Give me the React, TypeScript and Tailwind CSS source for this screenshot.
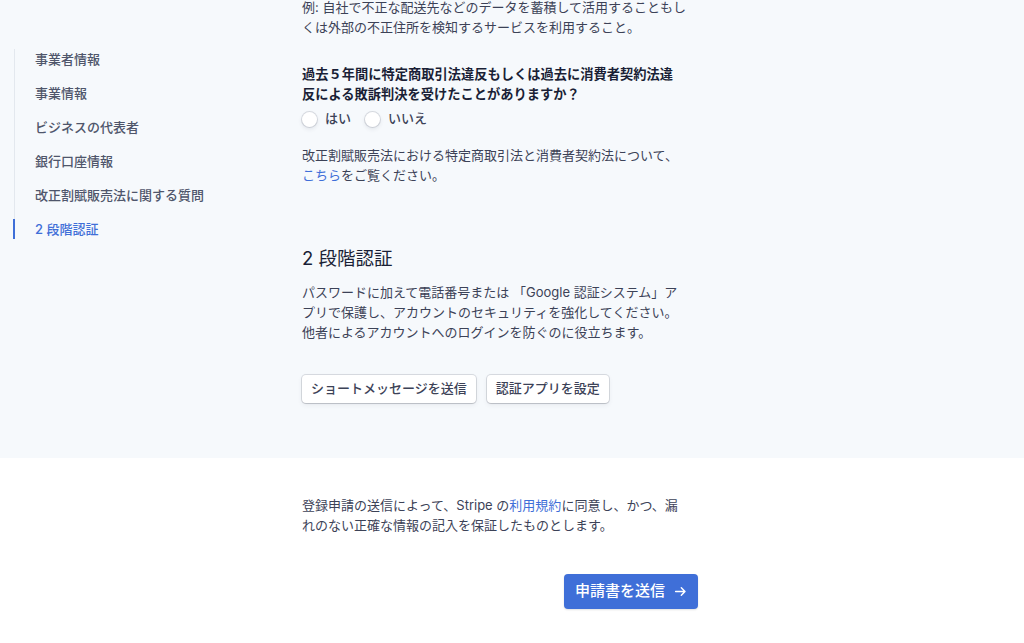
import React from "react";

const font = "font-['Inter','Noto_Sans_CJK_JP',sans-serif]";

function Radio({ label }: { label: string }) {
  return (
    <label className="flex items-center gap-[8px]">
      <span className="block w-[15px] h-[15px] rounded-full bg-white shadow-[0_0_0_1px_rgba(60,66,87,0.16),0_2px_4px_rgba(60,66,87,0.12)]" />
      <span className="text-[13px] font-medium text-[#3c4257]">{label}</span>
    </label>
  );
}

function SecButton({ children }: { children: React.ReactNode }) {
  return (
    <button className="h-[28px] px-[9px] rounded-[4px] bg-white text-[13px] font-medium text-[#3c4257] shadow-[0_0_0_1px_rgba(60,66,87,0.16),0_2px_5px_rgba(60,66,87,0.08),0_1px_1px_rgba(0,0,0,0.1)]">
      {children}
    </button>
  );
}

export default function App() {
  const nav = [
    "事業者情報",
    "事業情報",
    "ビジネスの代表者",
    "銀行口座情報",
    "改正割賦販売法に関する質問",
  ];
  return (
    <div className={`${font} w-[1024px] h-[643px] overflow-hidden bg-white`}>
      <div className="bg-[#f6f9fc] h-[458px] flex">
        <div className="w-[302px] shrink-0 pl-[14px] pt-[49px]">
          <ul className="border-l border-[#e3e8ee] flex flex-col gap-[14px]">
            {nav.map((n) => (
              <li key={n} className="pl-[20px] h-[20px] leading-[20px] text-[13px] font-medium text-[#4f566b]">
                {n}
              </li>
            ))}
            <li className="relative pl-[20px] h-[20px] leading-[20px] text-[13px] font-medium text-[#3f6fd8]">
              <span className="absolute left-[-2px] top-0 w-[2px] h-[20px] bg-[#3f6fd8]" />
              2 段階認証
            </li>
          </ul>
        </div>
        <div className="w-[396px] mt-[-3px] flex flex-col">
          <p className="text-[13px] leading-[20px] text-[#3c4257]">
            <span className="block whitespace-nowrap">例: 自社で不正な配送先などのデータを蓄積して活用することもし</span>
            <span className="block whitespace-nowrap">くは外部の不正住所を検知するサービスを利用すること。</span>
          </p>
          <p className="mt-[27px] text-[13.25px] leading-[20px] font-bold text-[#1a1f36]">
            <span className="block whitespace-nowrap">過去５年間に特定商取引法違反もしくは過去に消費者契約法違</span>
            <span className="block whitespace-nowrap">反による敗訴判決を受けたことがありますか？</span>
          </p>
          <div className="mt-[5px] h-[20px] flex items-center gap-[14px]">
            <Radio label="はい" />
            <Radio label="いいえ" />
          </div>
          <p className="mt-[16px] text-[13px] leading-[20px] text-[#3c4257]">
            <span className="block whitespace-nowrap">改正割賦販売法における特定商取引法と消費者契約法について、</span>
            <span className="block whitespace-nowrap">
              <span className="text-[#3f6fd8]">こちら</span>をご覧ください。
            </span>
          </p>
          <h2 className="mt-[59px] text-[18.5px] leading-[28px] font-normal text-[#1a1f36]">2 段階認証</h2>
          <p className="mt-[10px] text-[13px] leading-[20px] text-[#3c4257]">
            <span className="block whitespace-nowrap">パスワードに加えて電話番号または 「Google 認証システム」ア</span>
            <span className="block whitespace-nowrap">プリで保護し、アカウントのセキュリティを強化してください。</span>
            <span className="block whitespace-nowrap">他者によるアカウントへのログインを防ぐのに役立ちます。</span>
          </p>
          <div className="mt-[33px] flex gap-[11px]">
            <SecButton>ショートメッセージを送信</SecButton>
            <SecButton>認証アプリを設定</SecButton>
          </div>
        </div>
      </div>
      <div className="flex">
        <div className="w-[302px] shrink-0" />
        <div className="w-[396px] pt-[37px] flex flex-col">
          <p className="text-[13px] leading-[20px] text-[#3c4257]">
            <span className="block whitespace-nowrap">
              登録申請の送信によって、Stripe の<span className="text-[#3f6fd8]">利用規約</span>に同意し、かつ、漏
            </span>
            <span className="block whitespace-nowrap">れのない正確な情報の記入を保証したものとします。</span>
          </p>
          <div className="mt-[39px] flex justify-end">
            <button className="h-[35px] w-[134px] rounded-[4px] bg-[#3f6fd8] text-white text-[15px] font-medium flex items-center justify-center gap-[9px] shadow-[0_1px_2px_rgba(0,0,0,0.12)]">
              <span>申請書を送信</span>
              <svg width="13" height="13" viewBox="0 0 16 16" fill="none" stroke="white" strokeWidth="1.8" strokeLinecap="round" strokeLinejoin="round">
                <path d="M2 8h11M9 3.5L13.5 8 9 12.5" />
              </svg>
            </button>
          </div>
        </div>
      </div>
    </div>
  );
}
